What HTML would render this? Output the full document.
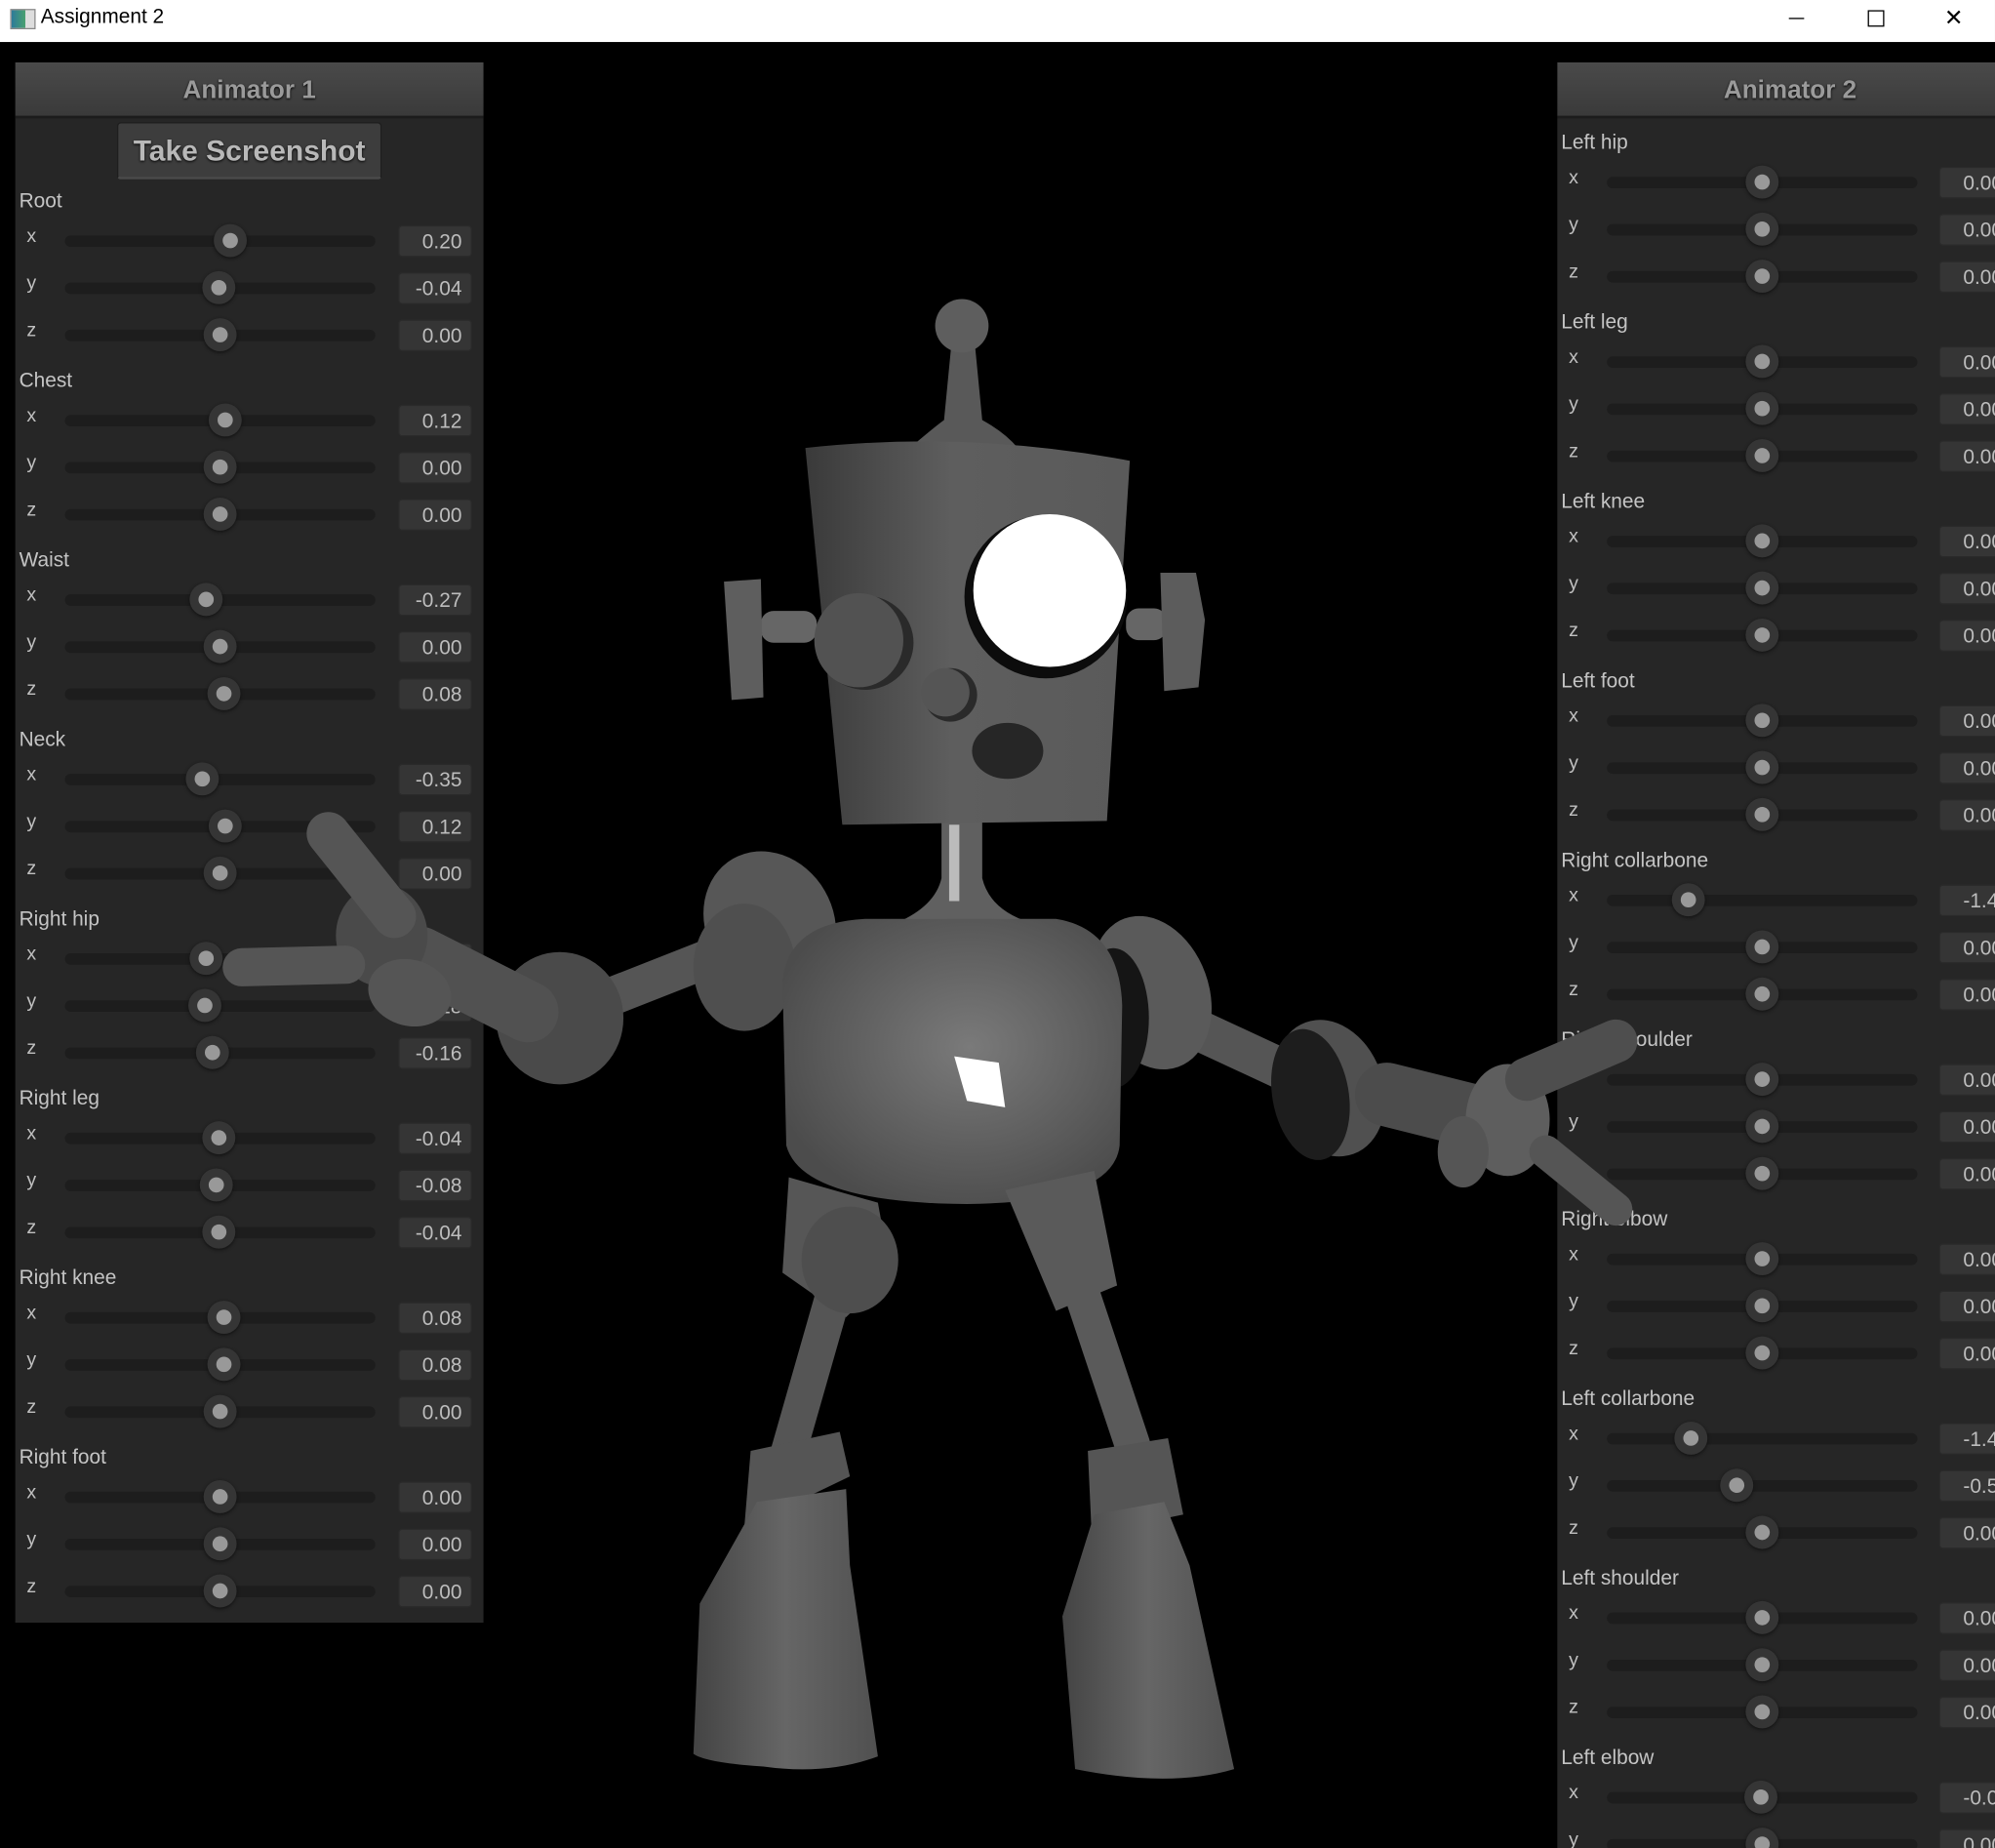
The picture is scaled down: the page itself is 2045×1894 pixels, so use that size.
<!DOCTYPE html>
<html><head><meta charset="utf-8"><style>
html,body{margin:0;padding:0;width:2045px;height:1894px;overflow:hidden;background:#000}
#s{position:absolute;left:0;top:0;width:1568px;height:1452px;transform-origin:0 0;transform:scale(1.3042,1.3044);font-family:"Liberation Sans",sans-serif}
#tb{position:absolute;left:0;top:0;width:1568px;height:33px;background:#fff}
#tb .t{position:absolute;left:32px;top:5px;font-size:16px;color:#000}
#tb .ic{position:absolute;left:8px;top:7px;width:18px;height:14px;background:linear-gradient(90deg,#2c7a9a,#4aa070 60%,#ddd 60%);border:1px solid #888}
.pan{position:absolute;background:#262626;overflow:hidden}
.hd{position:absolute;left:0;top:0;width:100%;height:42px;background:linear-gradient(#4a4a4a,#3a3a3a);border-bottom:2px solid #1c1c1c;text-align:center;line-height:44px;font-size:20px;font-weight:bold;color:#9a9a9a;text-shadow:0 1px 2px #000}
#rp .hd{width:366px}
.btn{position:absolute;left:80px;top:47px;width:206px;height:42px;background:#3d3d3d;border:1px solid #1e1e1e;border-bottom:2px solid #4a4a4a;border-radius:3px;text-align:center;line-height:42px;font-size:23px;font-weight:bold;color:#b8b8b8;text-shadow:0 1px 2px #000}
.g{position:absolute;left:0;width:100%;height:130px}
.gl{position:absolute;left:3px;top:0;line-height:20px;font-size:16px;color:#c4c4c4}
.r{position:absolute;left:0;width:100%;height:26px}
.ax{position:absolute;left:9px;top:0px;font-size:15px;color:#c0c0c0;line-height:20px}
.tr{position:absolute;left:39px;width:244px;top:9px;height:9px;border-radius:5px;background:#1d1d1d}
.k{position:absolute;top:0px;width:26px;height:26px;margin-left:-1px;border-radius:50%;background:#353535;box-shadow:0 1px 3px #111}
.k:after{content:"";position:absolute;left:7px;top:7px;width:12px;height:12px;border-radius:50%;background:#999}
.v{position:absolute;left:301px;top:1px;width:58px;height:25px;background:#353535;border:1px solid #2a2a2a;border-radius:3px;text-align:right;box-sizing:border-box;padding-right:7px;line-height:25px;font-size:16px;color:#bdbdbd}
#rp .v{left:300px;text-align:left;padding-left:18px}
svg{position:absolute;left:0;top:0}
</style></head><body><div id="s">
<div id="tb"><div class="ic"></div><div class="t">Assignment 2</div>
<div style="position:absolute;left:1406px;top:14px;width:12px;height:1px;background:#000"></div>
<div style="position:absolute;left:1468px;top:8px;width:11px;height:11px;border:1px solid #000"></div>
<div style="position:absolute;left:1528px;top:6px;font-size:18px;line-height:16px">&#x2715;</div></div>

<div class="pan" style="left:12px;top:49px;width:368px;height:1226px">
<div class="hd">Animator 1</div><div class="btn">Take Screenshot</div>
<div id="lp"></div>
</div>
<div class="pan" id="rp" style="left:1224px;top:49px;width:344px;height:1403px">
<div class="hd">Animator 2</div>
</div>

<svg width="1568" height="1452" viewBox="0 0 1568 1452">
<defs>
<linearGradient id="gh" x1="0" x2="1"><stop offset="0" stop-color="#3a3a3a"/><stop offset=".45" stop-color="#5e5e5e"/><stop offset="1" stop-color="#5a5a5a"/></linearGradient>
<linearGradient id="gl" x1="0" x2="1"><stop offset="0" stop-color="#444"/><stop offset=".5" stop-color="#666"/><stop offset="1" stop-color="#505050"/></linearGradient>
<radialGradient id="gt" cx=".55" cy=".45" r=".6"><stop offset="0" stop-color="#7a7a7a"/><stop offset="1" stop-color="#4c4c4c"/></radialGradient>
</defs>
<g stroke-linecap="round">
<path d="M748 268 L766 268 L772 330 Q790 340 800 352 L715 352 Q735 335 742 330 Z" fill="#595959"/>
<circle cx="756" cy="256" r="21" fill="#5e5e5e"/>
<path d="M740 645 L772 645 L772 690 Q778 715 810 725 L705 725 Q735 712 740 690 Z" fill="#606060"/>
<rect x="746" y="648" width="8" height="60" fill="#bbb"/>
<line x1="590" y1="740" x2="450" y2="795" stroke="#555" stroke-width="30"/>
<ellipse cx="605" cy="725" rx="50" ry="58" fill="#575757" transform="rotate(-30 605 725)"/>
<ellipse cx="585" cy="760" rx="40" ry="50" fill="#4f4f4f"/>
<ellipse cx="440" cy="800" rx="50" ry="52" fill="#4a4a4a"/>
<line x1="415" y1="795" x2="330" y2="752" stroke="#515151" stroke-width="48"/>
<ellipse cx="300" cy="735" rx="36" ry="40" fill="#4a4a4a"/>
<line x1="310" y1="720" x2="258" y2="655" stroke="#555" stroke-width="34"/>
<line x1="272" y1="758" x2="190" y2="760" stroke="#555" stroke-width="30"/>
<ellipse cx="322" cy="780" rx="33" ry="26" fill="#555" transform="rotate(15 322 780)"/>
<line x1="900" y1="790" x2="1040" y2="855" stroke="#555" stroke-width="32"/>
<ellipse cx="905" cy="780" rx="45" ry="62" fill="#5a5a5a" transform="rotate(-20 905 780)"/>
<ellipse cx="875" cy="800" rx="28" ry="55" fill="#151515"/>
<ellipse cx="1045" cy="855" rx="42" ry="55" fill="#505050" transform="rotate(-20 1045 855)"/>
<ellipse cx="1030" cy="860" rx="30" ry="52" fill="#1d1d1d" transform="rotate(-10 1030 860)"/>
<line x1="1090" y1="860" x2="1170" y2="880" stroke="#4c4c4c" stroke-width="50"/>
<ellipse cx="1185" cy="880" rx="33" ry="44" fill="#5e5e5e"/>
<line x1="1200" y1="848" x2="1270" y2="818" stroke="#4e4e4e" stroke-width="34"/>
<line x1="1215" y1="905" x2="1270" y2="950" stroke="#555" stroke-width="26"/>
<ellipse cx="1150" cy="905" rx="20" ry="28" fill="#555"/>
<path d="M615 770 Q620 725 680 722 L830 722 Q880 730 882 790 L880 900 Q875 945 760 946 Q630 945 618 900 Z" fill="url(#gt)"/>
<path d="M750 830 L785 835 L790 870 L760 865 Z" fill="#fff"/>
<line x1="660" y1="1000" x2="620" y2="1140" stroke="#555" stroke-width="28"/>
<line x1="845" y1="1000" x2="890" y2="1135" stroke="#5a5a5a" stroke-width="28"/>
<path d="M620 925 L690 945 L700 1000 L665 1035 L615 1000 Z" fill="#565656"/>
<ellipse cx="668" cy="990" rx="38" ry="42" fill="#4e4e4e"/>
<path d="M790 935 L860 920 L878 1010 L830 1030 Z" fill="#5a5a5a"/>
<path d="M590 1140 L660 1125 L668 1160 L585 1200 Z" fill="#555"/>
<path d="M595 1180 L665 1170 L668 1230 L690 1380 Q650 1395 600 1388 Q555 1385 545 1378 L550 1260 Z" fill="url(#gl)"/>
<path d="M855 1140 L918 1130 L930 1190 L858 1205 Z" fill="#555"/>
<path d="M860 1190 L915 1180 L935 1230 L970 1390 Q920 1405 845 1390 L835 1270 Z" fill="url(#gl)"/>
<path d="M633 352 Q760 338 888 362 L870 645 L662 648 Z" fill="url(#gh)"/>
<rect x="598" y="480" width="44" height="25" rx="10" fill="#666"/>
<rect x="885" y="478" width="32" height="25" rx="10" fill="#666"/>
<path d="M569 457 L598 455 L600 548 L575 550 Z" fill="#5e5e5e"/>
<path d="M912 450 L940 450 L947 487 L942 540 L915 543 Z" fill="#5c5c5c"/>
<ellipse cx="680" cy="505" rx="38" ry="37" fill="#2a2a2a"/>
<ellipse cx="675" cy="503" rx="35" ry="37" fill="#525252"/>
<circle cx="822" cy="469" r="64" fill="#0c0c0c"/>
<circle cx="825" cy="464" r="60" fill="#fff"/>
<circle cx="747" cy="546" r="21" fill="#2a2a2a"/>
<circle cx="743" cy="544" r="19" fill="#555"/>
<ellipse cx="792" cy="590" rx="28" ry="22" fill="#262626"/>
</g>
</svg>
</div>
<script>
function grp(el,top,lab,rows){var h='<div class="g" style="top:'+top+'px"><div class="gl">'+lab+'</div>';
var ax=['x','y','z'];for(var i=0;i<rows.length;i++){h+='<div class="r" style="top:'+(27+37*i)+'px"><div class="ax">'+ax[i]+'</div><div class="tr"></div><div class="k" style="left:'+rows[i][1]+'px"></div><div class="v">'+rows[i][0]+'</div></div>';}
el.insertAdjacentHTML('beforeend',h+'</div>');}
var L=document.querySelector('#lp').parentNode;
var ld=[['Root',[['0.20',181],['-0.04',172],['0.00',173]]],['Chest',[['0.12',177],['0.00',173],['0.00',173]]],['Waist',[['-0.27',162],['0.00',173],['0.08',176]]],['Neck',[['-0.35',159],['0.12',177],['0.00',173]]],['Right hip',[['-0.25',162],['-0.28',161],['-0.16',167]]],['Right leg',[['-0.04',172],['-0.08',170],['-0.04',172]]],['Right knee',[['0.08',176],['0.08',176],['0.00',173]]],['Right foot',[['0.00',173],['0.00',173],['0.00',173]]]];
ld.forEach(function(g,i){grp(L,157-8-49+141*i,g[0],g[1].map(function(r){return [r[0],r[1]-24];}));});
var R=document.getElementById('rp');
var z=['0.00',1384];
var rd=[['Left hip',[z,z,z]],['Left leg',[z,z,z]],['Left knee',[z,z,z]],['Left foot',[z,z,z]],['Right collarbone',[['-1.40',1326],z,z]],['Right shoulder',[z,z,z]],['Right elbow',[z,z,z]],['Left collarbone',[['-1.40',1328],['-0.50',1364],z]],['Left shoulder',[z,z,z]],['Left elbow',[['-0.00',1383],z]]];
rd.forEach(function(g,i){grp(R,111-8-49+141*i,g[0],g[1].map(function(r){return [r[0],r[1]-1224-12+1];}));});
</script>
</body></html>
